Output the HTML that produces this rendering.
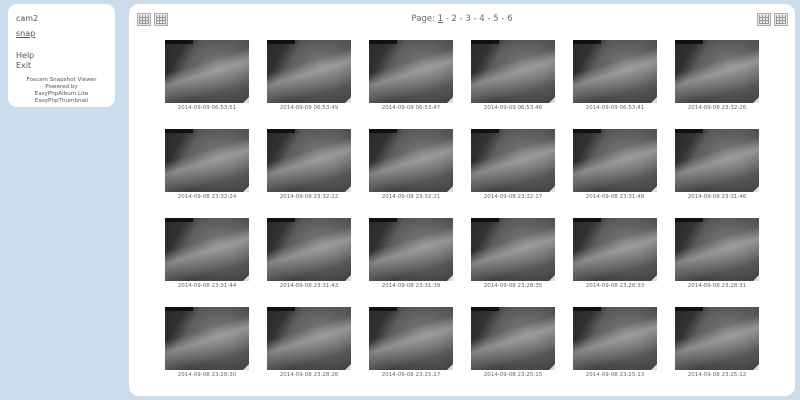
<!DOCTYPE html>
<html><head><style>
body{margin:0;width:800px;height:400px;background:#cbdcec;font-family:"DejaVu Sans","Liberation Sans",sans-serif;overflow:hidden;position:relative}
#side{position:absolute;left:8px;top:4px;width:107px;height:103px;background:#fff;border-radius:9px;color:#555}
#side .t{position:absolute;left:8px;font-size:8px}
#side .c{position:absolute;left:0;width:107px;text-align:center;font-size:5.6px;line-height:7px;top:73px}
#main{position:absolute;left:129px;top:4px;width:666px;height:392px;background:#fff;border-radius:10px}
.ic{position:absolute;width:14px;height:13px;border:1px solid #aaa;background:#e8e8e8;box-sizing:border-box}
.ic:before{content:"";position:absolute;left:1px;top:1px;right:1px;bottom:1px;background:repeating-linear-gradient(90deg,#999 0 1px,transparent 1px 3px),repeating-linear-gradient(0deg,#999 0 1px,transparent 1px 3px)}
#pg{position:absolute;left:0;width:666px;top:10px;text-align:center;font-size:8.5px;color:#666}
.th{position:absolute;width:84px;height:63px;background:
linear-gradient(163deg,transparent 0 38%,rgba(190,190,190,.55) 52%,rgba(170,170,170,.4) 62%,transparent 78%),
linear-gradient(120deg,rgba(20,20,20,.5) 0 18%,transparent 30%),
radial-gradient(ellipse at 65% 40%,#7a7a7a,#404040 80%);}
.th:before{content:"";position:absolute;left:0;top:0;width:28px;height:4px;background:#111}
.th:after{content:"";position:absolute;right:0;bottom:0;border-left:6px solid transparent;border-bottom:6px solid #ddd}
.cap{position:absolute;width:110px;text-align:center;font-size:5.5px;color:#666}
</style></head><body>
<div id="side">
<div class="t" style="top:10px">cam2</div>
<div class="t" style="top:25px;text-decoration:underline">snap</div>
<div class="t" style="top:47px">Help</div>
<div class="t" style="top:57px">Exit</div>
<div class="c">Foscam Snapshot Viewer<br>Powered by<br>EasyPhpAlbum Lite<br>EasyPhpThumbnail</div>
</div>
<div id="main">
<div class="ic" style="left:8px;top:9px"></div><div class="ic" style="left:25px;top:9px"></div>
<div class="ic" style="left:628px;top:9px"></div><div class="ic" style="left:645px;top:9px"></div>
<div id="pg">Page: <u>1</u> - 2 - 3 - 4 - 5 - 6</div>
</div>
<div id="g"></div>
<script>
var caps=["2014-09-09 06:53:51","2014-09-09 06:53:49","2014-09-09 06:53:47","2014-09-09 06:53:46","2014-09-09 06:53:41","2014-09-08 23:32:26",
"2014-09-08 23:32:24","2014-09-08 23:32:22","2014-09-08 23:32:21","2014-09-08 23:32:17","2014-09-08 23:31:48","2014-09-08 23:31:46",
"2014-09-08 23:31:44","2014-09-08 23:31:43","2014-09-08 23:31:39","2014-09-08 23:28:35","2014-09-08 23:28:33","2014-09-08 23:28:31",
"2014-09-08 23:28:30","2014-09-08 23:28:26","2014-09-08 23:25:17","2014-09-08 23:25:15","2014-09-08 23:25:13","2014-09-08 23:25:12"];
var h="";
for(var i=0;i<24;i++){var r=Math.floor(i/6),c=i%6,x=165+c*102,y=40+r*89;
h+='<div class="th" style="left:'+x+'px;top:'+y+'px"></div><div class="cap" style="left:'+(x-13)+'px;top:'+(y+65)+'px">'+caps[i]+'</div>';}
document.getElementById("g").innerHTML=h;
</script>
</body></html>
